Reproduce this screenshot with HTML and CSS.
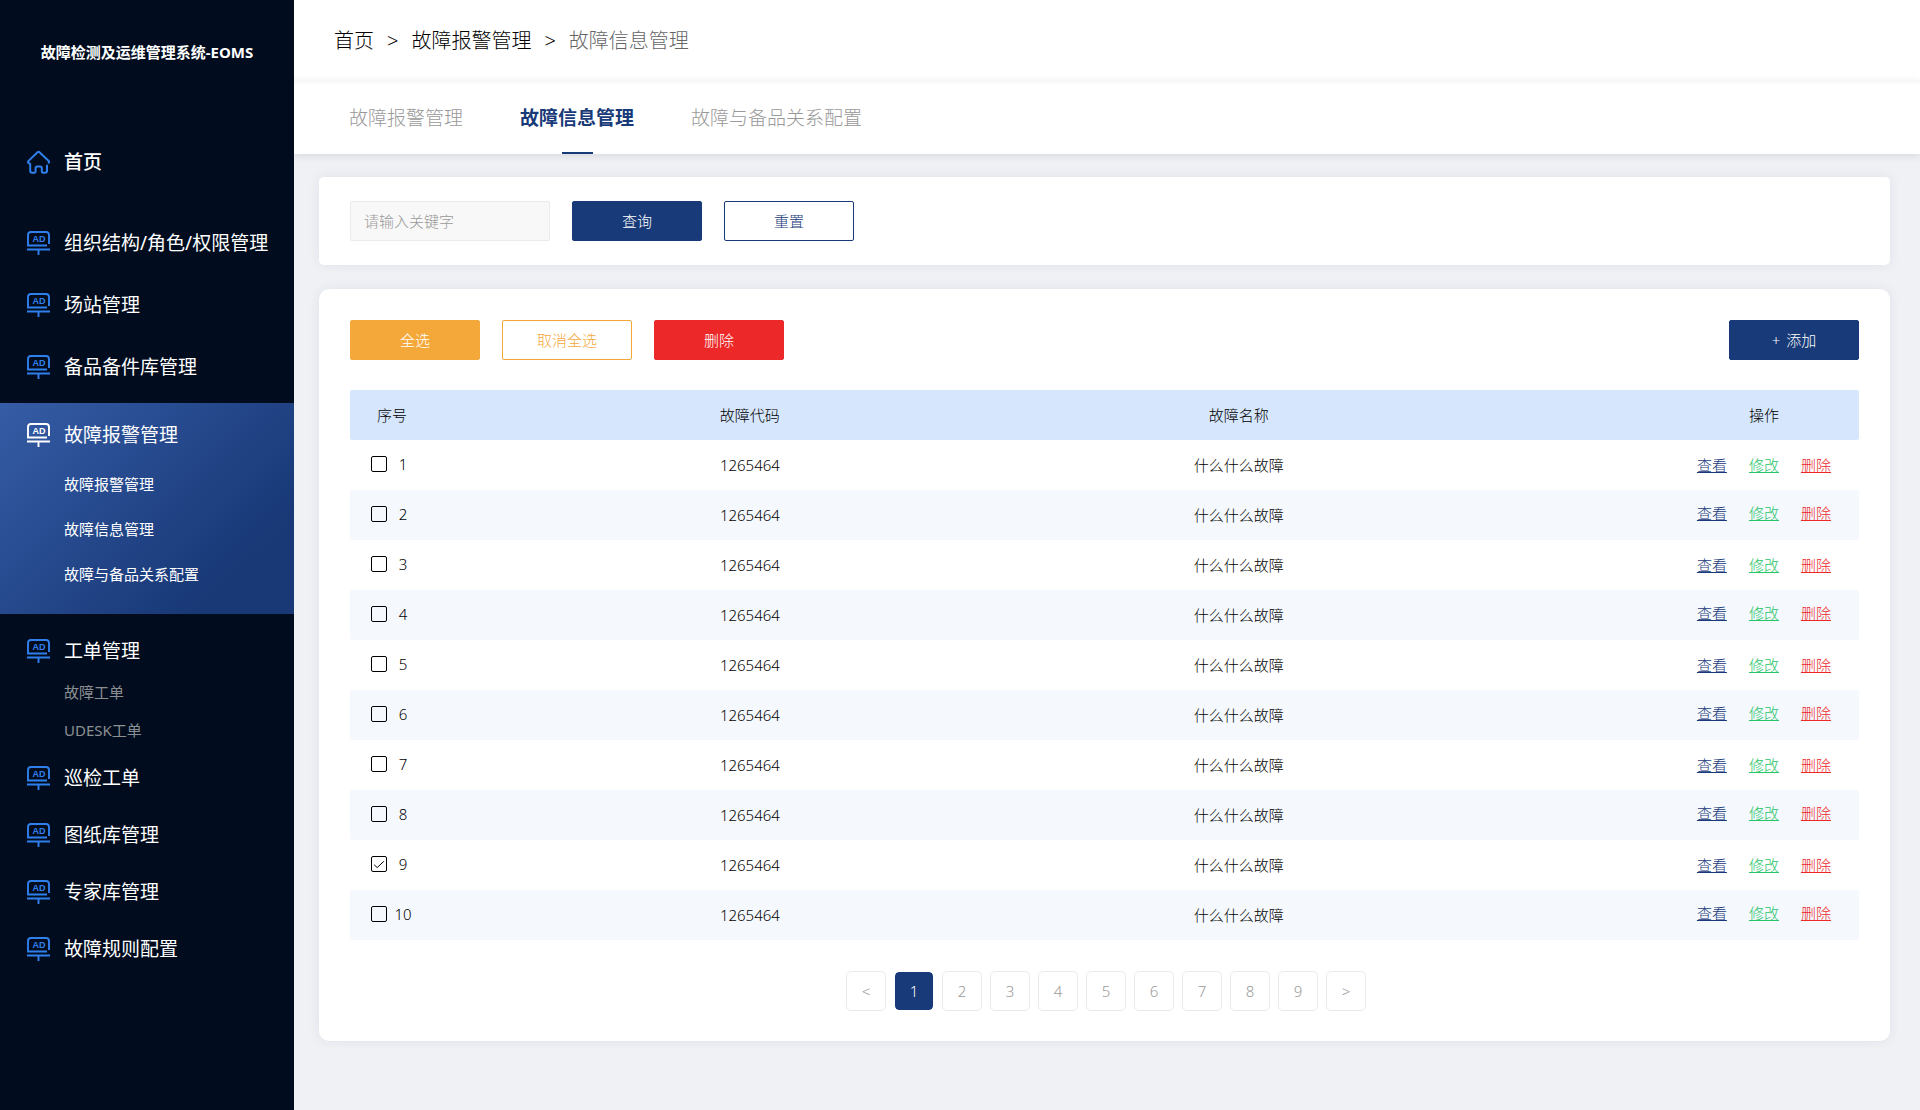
FILE: index.html
```html
<!DOCTYPE html>
<html lang="zh-CN">
<head>
<meta charset="utf-8">
<meta name="viewport" content="width=device-width, initial-scale=1">
<title>故障检测及运维管理系统-EOMS</title>
<link rel="stylesheet" href="styles.css">
</head>
<body>
<svg class="sprite" aria-hidden="true">
  <symbol id="icon-home" viewBox="0 0 24 24">
    <path d="M21.800 12.700C22.300 12 22.300 11.500 21.700 10.900L12.500 2.300Q11.500 1.500 10.500 2.300L1.600 10.900C.8 11.700 .8 12.600 1.500 13Q3.200 13.300 3.200 14V20.800Q3.200 22.800 5.200 22.800H7.200Q8.600 22.800 8.600 21.400V18.200Q8.600 16.600 10.200 16.600H13.200Q14.800 16.600 14.800 18.200V21.400Q14.800 22.800 16.200 22.800H18Q20 22.800 20 20.800V15.500" fill="none" stroke="currentColor" stroke-width="2" stroke-linecap="round" stroke-linejoin="round"/>
  </symbol>
  <symbol id="icon-ad" viewBox="0 0 24 24">
    <path d="M22 13V4Q22 1 19 1H4Q1 1 1 4V14.500H20" fill="none" stroke="currentColor" stroke-width="1.900"/>
    <path d="M0 18.500H23M11.500 18.500V24" fill="none" stroke="currentColor" stroke-width="1.900"/>
    <text class="icon-text" x="12" y="11" text-anchor="middle">AD</text>
  </symbol>
</svg>
<div class="app">
  <aside class="sidebar">
    <h1 class="brand">故障检测及运维管理系统-EOMS</h1>
    <nav class="menu">
      <a class="menu-item menu-home" href="#"><svg class="icon"><use href="#icon-home"/></svg>首页</a>
      <a class="menu-item" href="#"><svg class="icon"><use href="#icon-ad"/></svg>组织结构/角色/权限管理</a>
      <a class="menu-item" href="#"><svg class="icon"><use href="#icon-ad"/></svg>场站管理</a>
      <a class="menu-item" href="#"><svg class="icon"><use href="#icon-ad"/></svg>备品备件库管理</a>
      <div class="group group-active">
        <a class="menu-item" href="#"><svg class="icon"><use href="#icon-ad"/></svg>故障报警管理</a>
        <a class="sub-item" href="#">故障报警管理</a>
        <a class="sub-item" href="#">故障信息管理</a>
        <a class="sub-item" href="#">故障与备品关系配置</a>
      </div>
      <div class="group group-muted">
        <a class="menu-item" href="#"><svg class="icon"><use href="#icon-ad"/></svg>工单管理</a>
        <a class="sub-item" href="#">故障工单</a>
        <a class="sub-item" href="#">UDESK工单</a>
      </div>
      <div class="menu-compact">
        <a class="menu-item" href="#"><svg class="icon"><use href="#icon-ad"/></svg>巡检工单</a>
        <a class="menu-item" href="#"><svg class="icon"><use href="#icon-ad"/></svg>图纸库管理</a>
        <a class="menu-item" href="#"><svg class="icon"><use href="#icon-ad"/></svg>专家库管理</a>
        <a class="menu-item" href="#"><svg class="icon"><use href="#icon-ad"/></svg>故障规则配置</a>
      </div>
    </nav>
  </aside>
  <main class="main">
    <nav class="crumbs" aria-label="面包屑">
      <a href="#">首页</a><span>&gt;</span><a href="#">故障报警管理</a><span>&gt;</span><span class="crumb-current">故障信息管理</span>
    </nav>
    <nav class="tabs">
      <a class="tab" href="#">故障报警管理</a>
      <a class="tab tab-active" href="#">故障信息管理</a>
      <a class="tab" href="#">故障与备品关系配置</a>
    </nav>
    <div class="content">
      <form class="card search">
        <input class="keyword" type="text" placeholder="请输入关键字" aria-label="请输入关键字">
        <button class="btn btn-primary" type="button">查询</button>
        <button class="btn btn-outline" type="reset">重置</button>
      </form>
      <section class="card panel">
        <div class="toolbar">
          <button class="btn btn-warn" type="button">全选</button>
          <button class="btn btn-warn-outline" type="button">取消全选</button>
          <button class="btn btn-danger" type="button">删除</button>
          <button class="btn btn-primary btn-add" type="button"><span>+</span>添加</button>
        </div>
        <table class="faults">
          <colgroup><col class="col-no"><col class="col-code"><col class="col-name"><col class="col-ops"></colgroup>
          <thead>
            <tr><th class="cell-no">序号</th><th>故障代码</th><th>故障名称</th><th>操作</th></tr>
          </thead>
          <tbody>
            <tr><td><label class="pick"><input type="checkbox"><span>1</span></label></td><td>1265464</td><td>什么什么故障</td><td><div class="ops"><a class="op-view" href="#">查看</a><a class="op-edit" href="#">修改</a><a class="op-del" href="#">删除</a></div></td></tr>
            <tr><td><label class="pick"><input type="checkbox"><span>2</span></label></td><td>1265464</td><td>什么什么故障</td><td><div class="ops"><a class="op-view" href="#">查看</a><a class="op-edit" href="#">修改</a><a class="op-del" href="#">删除</a></div></td></tr>
            <tr><td><label class="pick"><input type="checkbox"><span>3</span></label></td><td>1265464</td><td>什么什么故障</td><td><div class="ops"><a class="op-view" href="#">查看</a><a class="op-edit" href="#">修改</a><a class="op-del" href="#">删除</a></div></td></tr>
            <tr><td><label class="pick"><input type="checkbox"><span>4</span></label></td><td>1265464</td><td>什么什么故障</td><td><div class="ops"><a class="op-view" href="#">查看</a><a class="op-edit" href="#">修改</a><a class="op-del" href="#">删除</a></div></td></tr>
            <tr><td><label class="pick"><input type="checkbox"><span>5</span></label></td><td>1265464</td><td>什么什么故障</td><td><div class="ops"><a class="op-view" href="#">查看</a><a class="op-edit" href="#">修改</a><a class="op-del" href="#">删除</a></div></td></tr>
            <tr><td><label class="pick"><input type="checkbox"><span>6</span></label></td><td>1265464</td><td>什么什么故障</td><td><div class="ops"><a class="op-view" href="#">查看</a><a class="op-edit" href="#">修改</a><a class="op-del" href="#">删除</a></div></td></tr>
            <tr><td><label class="pick"><input type="checkbox"><span>7</span></label></td><td>1265464</td><td>什么什么故障</td><td><div class="ops"><a class="op-view" href="#">查看</a><a class="op-edit" href="#">修改</a><a class="op-del" href="#">删除</a></div></td></tr>
            <tr><td><label class="pick"><input type="checkbox"><span>8</span></label></td><td>1265464</td><td>什么什么故障</td><td><div class="ops"><a class="op-view" href="#">查看</a><a class="op-edit" href="#">修改</a><a class="op-del" href="#">删除</a></div></td></tr>
            <tr><td><label class="pick"><input type="checkbox" checked><span>9</span></label></td><td>1265464</td><td>什么什么故障</td><td><div class="ops"><a class="op-view" href="#">查看</a><a class="op-edit" href="#">修改</a><a class="op-del" href="#">删除</a></div></td></tr>
            <tr><td><label class="pick"><input type="checkbox"><span>10</span></label></td><td>1265464</td><td>什么什么故障</td><td><div class="ops"><a class="op-view" href="#">查看</a><a class="op-edit" href="#">修改</a><a class="op-del" href="#">删除</a></div></td></tr>
          </tbody>
        </table>
        <nav class="pages" aria-label="分页">
          <button class="page" type="button">&lt;</button>
          <button class="page page-active" type="button">1</button>
          <button class="page" type="button">2</button>
          <button class="page" type="button">3</button>
          <button class="page" type="button">4</button>
          <button class="page" type="button">5</button>
          <button class="page" type="button">6</button>
          <button class="page" type="button">7</button>
          <button class="page" type="button">8</button>
          <button class="page" type="button">9</button>
          <button class="page" type="button">&gt;</button>
        </nav>
      </section>
    </div>
  </main>
</div>
</body>
</html>
```
FILE: styles.css
```css
:root {
  --navy: #183a78;
  --orange: #f4a83a;
  --red: #ec2828;
}

* { box-sizing: border-box; }

body {
  margin: 0;
  background: #eff1f5;
  color: #000;
  font-family: "Noto Sans", "Noto Sans CJK SC", sans-serif;
  font-size: 15px;
  font-weight: 300;
  line-height: 20px;
}

a { color: inherit; text-decoration: none; }

button, input { font: inherit; }

.sprite { display: none; }

.app {
  display: flex;
  min-height: 100vh;
}

/* Sidebar */
.sidebar {
  flex: 0 0 294px;
  background: #010d1f;
  color: #fff;
  font-weight: 400;
}

.brand {
  margin: 0;
  font-size: 15px;
  line-height: 104px;
  text-align: center;
}

.menu { padding-top: 27px; }

.menu-item {
  display: flex;
  align-items: center;
  gap: 13px;
  height: 62px;
  padding-left: 27px;
  font-size: 19px;
  white-space: nowrap;
}

.menu-home {
  margin-bottom: 19px;
  font-weight: 500;
}

.icon {
  flex: none;
  width: 24px;
  height: 24px;
  color: #2f80ed;
}

.icon-text {
  fill: currentColor;
  font: bold 9px "Liberation Sans", sans-serif;
}

.sub-item {
  display: block;
  padding-left: 64px;
}

.group-active {
  margin-top: 5px;
  padding: 5px 0 17px;
  background: linear-gradient(135deg, #355ca6 0%, #183876 80%);
}

.group-active .menu-item { height: 54px; }
.group-active .icon { color: #fff; }
.group-active .sub-item { line-height: 45px; }

.group-muted { padding-top: 15px; }
.group-muted .menu-item { height: 44px; }

.group-muted .sub-item {
  color: #8c8f92;
  line-height: 38px;
}

.menu-compact .menu-item { height: 57px; }

/* Header */
.main {
  flex: 1;
  min-width: 0;
}

.crumbs {
  display: flex;
  align-items: center;
  gap: 13px;
  height: 80px;
  padding: 2px 0 0 40px;
  background: #fff;
  font-size: 20px;
}

.crumb-current { color: #666; }

.tabs {
  display: flex;
  gap: 57px;
  height: 74px;
  padding-left: 55px;
  background: linear-gradient(#f5f5f5, #fff 5px);
  box-shadow: 0 2px 8px rgba(0, 0, 0, .1);
}

.tab {
  display: flex;
  flex-direction: column;
  align-items: center;
  color: #999;
  font-size: 19px;
  line-height: 76px;
}

.tab-active {
  color: var(--navy);
  font-weight: bold;
}

.tab-active::after {
  content: "";
  width: 31px;
  height: 2px;
  margin-top: -4px;
  background: var(--navy);
}

/* Content */
.content { padding: 23px 30px 69px 25px; }

.card {
  background: #fff;
  box-shadow: 0 0 12px rgba(40, 50, 80, .08);
}

.search {
  display: flex;
  gap: 22px;
  padding: 24px 31px;
  border-radius: 5px;
}

.keyword {
  width: 200px;
  height: 40px;
  padding: 0 13px;
  border: 1px solid #ebebeb;
  border-radius: 2px;
  background: #f8f8f8;
}

.keyword::placeholder { color: #999; }

.btn {
  width: 130px;
  height: 40px;
  padding: 0;
  border: 1px solid;
  border-radius: 2px;
}

.btn-primary { border-color: var(--navy); background: var(--navy); color: #fff; }
.btn-outline { border-color: var(--navy); background: #fff; color: var(--navy); }
.btn-warn { border-color: var(--orange); background: var(--orange); color: #fff; }
.btn-warn-outline { border-color: var(--orange); background: #fff; color: var(--orange); }
.btn-danger { border-color: var(--red); background: var(--red); color: #fff; }

.panel {
  margin-top: 24px;
  padding: 31px 31px 30px;
  border-radius: 10px;
}

.toolbar {
  display: flex;
  gap: 22px;
}

.btn-add {
  display: flex;
  align-items: center;
  justify-content: center;
  gap: 6px;
  margin-left: auto;
}

/* Table */
.faults {
  width: 100%;
  margin-top: 30px;
  border-spacing: 0;
  table-layout: fixed;
}

.col-no { width: 22.6%; }
.col-code { width: 7.8%; }
.col-name { width: 57%; }
.col-ops { width: 12.6%; }

.faults th, .faults td {
  height: 50px;
  padding: 0;
  font-weight: 300;
  text-align: center;
}

.faults th { background: #d6e6fc; }
.faults tbody tr:nth-child(even) td { background: #f5f9fe; }

.faults tr > :first-child { border-radius: 2px 0 0 2px; }
.faults tr > :last-child { border-radius: 0 2px 2px 0; }

.faults .cell-no {
  padding-left: 27px;
  text-align: left;
}

.pick {
  display: flex;
  align-items: center;
  gap: 6px;
  padding: 0 0 2px 21px;
}

.pick span { width: 20px; }

.pick input {
  width: 16px;
  height: 16px;
  margin: 0;
  appearance: none;
  border: 1px solid #000;
  border-radius: 2px;
}

.pick input:checked {
  background: url("data:image/svg+xml,%3Csvg xmlns='http://www.w3.org/2000/svg' viewBox='0 0 14 14'%3E%3Cpath d='M2.200 7.800L5.200 10.600L11.800 4.300' fill='none' stroke='%23000'/%3E%3C/svg%3E") center / 14px 14px no-repeat;
}

.ops {
  display: flex;
  justify-content: center;
  gap: 22px;
}

.faults tr:nth-child(even) .ops { padding-bottom: 4px; }

.ops a { text-decoration: underline; }
.op-view { color: var(--navy); }
.op-edit { color: #27c468; }
.op-del { color: var(--red); }

/* Pagination */
.pages {
  display: flex;
  justify-content: center;
  gap: 8px;
  margin-top: 31px;
  padding-left: 3px;
}

.page {
  width: 40px;
  height: 40px;
  padding: 0;
  border: 1px solid #ebebeb;
  border-radius: 5px;
  background: #fff;
  color: #999;
}

.page-active {
  border-color: #fff;
  background: var(--navy);
  background-clip: padding-box;
  color: #fff;
}
```
